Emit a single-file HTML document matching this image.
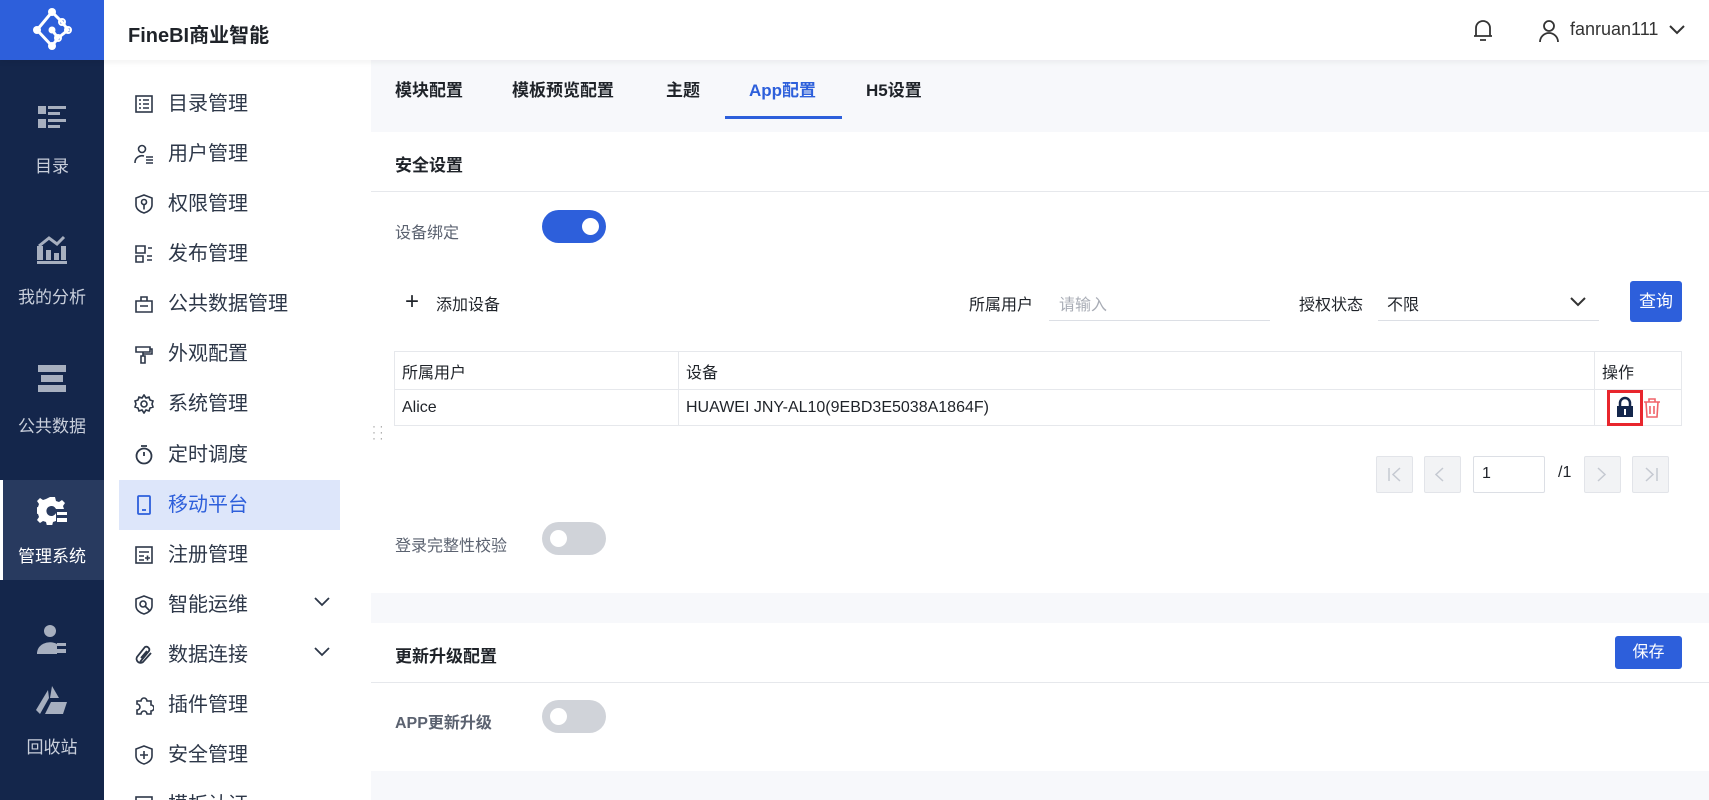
<!DOCTYPE html>
<html style="width:1709px;height:800px;overflow:hidden"><head><meta charset="utf-8"><style>
*{box-sizing:border-box;margin:0;padding:0}
body{width:1709px;height:800px;overflow:hidden;font-family:"Liberation Sans","Noto Sans CJK SC",sans-serif;background:#f7f8fb;position:relative;color:#1f2329}
#wrap{position:absolute;left:0;top:0;width:1709px;height:800px;overflow:hidden}
.a{position:absolute}
.top{left:0;top:0;width:1709px;height:60px;background:#fff;box-shadow:0 2px 6px rgba(0,0,0,.06);z-index:2}
.logo{left:0;top:0;width:104px;height:60px;background:#2d5fdb}
.dark{left:0;top:60px;width:104px;height:740px;background:#14264b}
.dl{color:#c9cfdb;font-size:17px;width:104px;text-align:center}
.side{left:104px;top:60px;width:267px;height:740px;background:#fff}
.mi{left:119px;width:221px;height:50px;font-size:20px;color:#2d3748;line-height:50px;padding-left:49px}
.mi svg{position:absolute;left:15px;top:15px}
.tab{top:60px;height:60px;line-height:62px;font-size:17px;font-weight:bold;color:#1f2329}
.card{left:371px;width:1338px;background:#fff}
.lbl{font-size:16px;color:#5b6270}
.tg{width:64px;height:33px;border-radius:17px;background:#d0d3d9}
.tg i{position:absolute;left:8px;top:8px;width:17px;height:17px;border-radius:50%;background:#fff}
.btn{background:#2d5fdb;color:#fff;border-radius:3px;font-size:17px;text-align:center}
.pg{width:37px;height:37px;border:1px solid #e2e4e9;background:#f2f3f5;border-radius:2px}
td{border:1px solid #e6e8ec;font-size:16px;padding-left:7px;color:#1f2329}
</style></head><body><div id="wrap">
<div class="a top"></div>
<div class="a logo" style="z-index:3"><svg width="104" height="60" viewBox="0 0 104 60"><g stroke="#fff" stroke-width="3" fill="none"><path d="M52 12 L37 30 L52 46 M52 12 L62 22 L68 30 L58 38 M52 30 L58 38 L52 46"/></g><g fill="#fff"><circle cx="52" cy="12" r="4"/><circle cx="37" cy="30" r="4"/><circle cx="52" cy="46" r="4"/><circle cx="52" cy="30" r="3.5"/><circle cx="62" cy="22" r="3" fill="none" stroke="#fff" stroke-width="2"/><circle cx="68" cy="30" r="3" fill="none" stroke="#fff" stroke-width="2"/><circle cx="58" cy="38" r="3" fill="none" stroke="#fff" stroke-width="2"/></g></svg></div>
<div class="a" style="left:128px;top:19px;font-size:20px;font-weight:bold;z-index:3">FineBI商业智能</div>
<svg class="a" style="left:1472px;top:18px;z-index:3" width="22" height="24" viewBox="0 0 22 24" fill="none" stroke="#333" stroke-width="1.8"><path d="M4 18 V10 a7 7 0 0 1 14 0 V18 Z M2 18 H20 M8 22 H14"/></svg>
<svg class="a" style="left:1538px;top:19px;z-index:3" width="22" height="24" viewBox="0 0 22 24" fill="none" stroke="#333" stroke-width="1.8"><circle cx="11" cy="7" r="5"/><path d="M2 23 a9 9 0 0 1 18 0"/></svg>
<div class="a" style="left:1570px;top:19px;font-size:18px;color:#333;z-index:3">fanruan111</div>
<svg class="a" style="left:1668px;top:24px;z-index:3" width="18" height="12" viewBox="0 0 18 12" fill="none" stroke="#333" stroke-width="2"><path d="M2 2 L9 9 L16 2"/></svg>

<div class="a dark"></div>
<svg class="a" style="left:38px;top:106px" width="28" height="26"><g fill="#a7afbf"><rect x="0" y="0" width="8" height="8"/><rect x="0" y="13" width="8" height="9"/><rect x="10" y="0" width="18" height="3"/><rect x="10" y="6" width="12" height="3"/><rect x="10" y="13" width="18" height="3"/><rect x="10" y="19" width="12" height="3"/></g></svg>
<div class="a dl" style="top:152px">目录</div>
<svg class="a" style="left:37px;top:234px" width="30" height="30"><g fill="#a7afbf"><rect x="0" y="12" width="6" height="14"/><rect x="9" y="16" width="5" height="10"/><rect x="17" y="19" width="5" height="7"/><rect x="24" y="12" width="5" height="14"/><rect x="0" y="27" width="30" height="3"/><path d="M2 12 L12 4 L20 10 L27 3" stroke="#a7afbf" stroke-width="3" fill="none"/></g></svg>
<div class="a dl" style="top:283px">我的分析</div>
<svg class="a" style="left:38px;top:365px" width="28" height="28"><g fill="#a7afbf"><rect x="0" y="0" width="28" height="7"/><rect x="3" y="10" width="22" height="7"/><rect x="0" y="20" width="28" height="7"/></g></svg>
<div class="a dl" style="top:412px">公共数据</div>
<div class="a" style="left:0;top:480px;width:104px;height:100px;background:#283a5f;border-left:3px solid #fff"></div>
<svg class="a" style="left:37px;top:495px" width="30" height="30"><path fill="#fff" d="M13 2 h5 l1 4 3 1 3-2 3 3-2 3 1 3 h-8 a5 5 0 1 0 0 4 v8 l-3 1-1 4h-5l-1-4-3-1-3 2-3-3 2-3-1-3-4-1v-5l4-1 1-3-2-3 3-3 3 2 3-1z"/><rect x="20" y="17" width="10" height="3" fill="#fff"/><rect x="20" y="23" width="10" height="4" fill="#fff"/></svg>
<div class="a dl" style="top:542px;color:#fff">管理系统</div>
<svg class="a" style="left:37px;top:624px" width="30" height="30"><g fill="#a7afbf"><circle cx="13" cy="7" r="6"/><path d="M0 30 a13 11 0 0 1 20-10 v10z"/><rect x="20" y="19" width="9" height="3"/><rect x="20" y="25" width="9" height="4"/></g></svg>
<svg class="a" style="left:36px;top:686px" width="32" height="28"><g fill="#a7afbf"><path d="M16 0 l7 12 h-9 z M12 4 l-12 20 l4 4 l9-16z M15 16 h16 l-4 12 h-18z"/></g></svg>
<div class="a dl" style="top:733px">回收站</div>

<div class="a side"></div>
<div class="a" style="left:119px;top:480px;width:221px;height:50px;background:#dde6fa"></div>
<div class="a mi" style="top:79px"><svg width="20" height="20" fill="none" stroke="#2d3748" stroke-width="1.6"><rect x="2" y="2" width="16" height="16"/><path d="M5 6h2M9 6h6M5 10h2M9 10h6M5 14h2M9 14h6"/></svg>目录管理</div>
<div class="a mi" style="top:129px"><svg width="20" height="20" fill="none" stroke="#2d3748" stroke-width="1.6"><circle cx="8" cy="5" r="3.5"/><path d="M1 19a7 7 0 0 1 9-7M12 13h7M12 16h7M12 19h7"/></svg>用户管理</div>
<div class="a mi" style="top:179px"><svg width="20" height="20" fill="none" stroke="#2d3748" stroke-width="1.6"><path d="M10 1l8 3v7c0 4-4 7-8 8-4-1-8-4-8-8V4z"/><circle cx="10" cy="8" r="2.5"/><path d="M10 10.5v5"/></svg>权限管理</div>
<div class="a mi" style="top:229px"><svg width="20" height="20" fill="none" stroke="#2d3748" stroke-width="1.6"><path d="M2 2h9v7H2zM2 12h7v6H2zM13 12h5M13 16h5M14 4h4"/></svg>发布管理</div>
<div class="a mi" style="top:279px"><svg width="20" height="20" fill="none" stroke="#2d3748" stroke-width="1.6"><path d="M2 7h16v11H2zM7 7V3h6v4M6 12h8"/></svg>公共数据管理</div>
<div class="a mi" style="top:329px"><svg width="20" height="20" fill="none" stroke="#2d3748" stroke-width="1.6"><path d="M2 3h14v5H2zM9 8v4M7 12h4v7H7zM16 5h2v5h-9"/></svg>外观配置</div>
<div class="a mi" style="top:379px"><svg width="20" height="20" fill="none" stroke="#2d3748" stroke-width="1.6"><circle cx="10" cy="10" r="3"/><path d="M10 1l2 3 3-1 1 3 3 1-1 3 1 3-3 1-1 3-3-1-2 3-2-3-3 1-1-3-3-1 1-3-1-3 3-1 1-3 3 1z"/></svg>系统管理</div>
<div class="a mi" style="top:430px"><svg width="20" height="20" fill="none" stroke="#2d3748" stroke-width="1.8"><circle cx="10" cy="11" r="7.5"/><path d="M7 1h6M10 11V7"/></svg>定时调度</div>
<div class="a mi" style="top:480px;color:#2d5fdb"><svg width="20" height="20" fill="none" stroke="#2d5fdb" stroke-width="1.8"><rect x="4" y="1" width="12" height="18" rx="1"/><path d="M8 15h4"/></svg>移动平台</div>
<div class="a mi" style="top:530px"><svg width="20" height="20" fill="none" stroke="#2d3748" stroke-width="1.6"><rect x="2" y="2" width="16" height="16"/><path d="M5 7h10M5 11h5M5 15h5M11 13h5M13.5 10.5v5"/></svg>注册管理</div>
<div class="a mi" style="top:580px"><svg width="20" height="20" fill="none" stroke="#2d3748" stroke-width="1.6"><path d="M10 1l8 3v7c0 4-4 7-8 8-4-1-8-4-8-8V4z"/><circle cx="9" cy="9" r="3"/><path d="M11 11l5 5"/></svg>智能运维<svg style="left:195px;top:17px" width="16" height="10" fill="none" stroke="#2d3748" stroke-width="1.8"><path d="M1 1l7 7 7-7"/></svg></div>
<div class="a mi" style="top:630px"><svg width="20" height="20" fill="none" stroke="#2d3748" stroke-width="1.8"><path d="M6 17L15 6a3 3 0 0 0-4-4L3 12a4 4 0 0 0 6 5l8-9M7 13l6-7"/></svg>数据连接<svg style="left:195px;top:17px" width="16" height="10" fill="none" stroke="#2d3748" stroke-width="1.8"><path d="M1 1l7 7 7-7"/></svg></div>
<div class="a mi" style="top:680px"><svg width="20" height="20" fill="none" stroke="#2d3748" stroke-width="1.6"><path d="M3 6h4a3 3 0 0 1 6 0h4v4a3 3 0 0 1 0 6v3H13a3 3 0 0 0-6 0H3v-4a3 3 0 0 0 0-6z"/></svg>插件管理</div>
<div class="a mi" style="top:730px"><svg width="20" height="20" fill="none" stroke="#2d3748" stroke-width="1.6"><path d="M10 1l8 3v7c0 4-4 7-8 8-4-1-8-4-8-8V4z"/><path d="M6 10h8M10 6v8"/></svg>安全管理</div>
<div class="a mi" style="top:780px;height:20px;overflow:hidden"><svg width="20" height="20" fill="none" stroke="#2d3748" stroke-width="1.6"><rect x="2" y="2" width="16" height="16"/></svg>模板认证</div>

<div class="a tab" style="left:395px">模块配置</div>
<div class="a tab" style="left:512px">模板预览配置</div>
<div class="a tab" style="left:666px">主题</div>
<div class="a tab" style="left:749px;color:#2d5fdb">App配置</div>
<div class="a" style="left:725px;top:116px;width:117px;height:3px;background:#2d5fdb"></div>
<div class="a tab" style="left:866px">H5设置</div>

<div class="a card" style="top:132px;height:461px"></div>
<div class="a" style="left:395px;top:151px;font-size:17px;font-weight:bold">安全设置</div>
<div class="a" style="left:371px;top:191px;width:1338px;height:1px;background:#e6e8ec"></div>
<div class="a lbl" style="left:395px;top:219px">设备绑定</div>
<div class="a tg" style="left:542px;top:210px;background:#2d5fdb"><i style="left:40px"></i></div>
<div class="a" style="left:405px;top:289px;font-size:24px;color:#1f2329;line-height:26px">+</div>
<div class="a" style="left:436px;top:291px;font-size:16px">添加设备</div>
<div class="a" style="left:969px;top:291px;font-size:16px">所属用户</div>
<div class="a" style="left:1049px;top:291px;font-size:16px;color:#a9adb6;padding-left:10px;width:221px;height:30px;border-bottom:1px solid #dcdfe5">请输入</div>
<div class="a" style="left:1299px;top:291px;font-size:16px">授权状态</div>
<div class="a" style="left:1378px;top:291px;font-size:16px;padding-left:9px;width:221px;height:30px;border-bottom:1px solid #dcdfe5">不限</div>
<svg class="a" style="left:1569px;top:296px" width="18" height="12" fill="none" stroke="#333" stroke-width="2"><path d="M2 2l7 7 7-7"/></svg>
<div class="a btn" style="left:1630px;top:281px;width:52px;height:41px;line-height:41px">查询</div>
<table class="a" style="left:394px;top:351px;width:1288px;border-collapse:collapse">
<tr style="height:38px"><td style="width:284px">所属用户</td><td style="width:916px">设备</td><td>操作</td></tr>
<tr style="height:36px"><td>Alice</td><td>HUAWEI JNY-AL10(9EBD3E5038A1864F)</td><td></td></tr></table>
<div class="a" style="left:1607px;top:390px;width:36px;height:36px;border:3px solid #e8262d"></div>
<svg class="a" style="left:1616px;top:396px" width="18" height="22"><path d="M4 10V7a5 5 0 0 1 10 0v3" fill="none" stroke="#14264b" stroke-width="2.5"/><rect x="1" y="10" width="16" height="11" fill="#14264b"/><rect x="8" y="13" width="2" height="6" fill="#fff"/></svg>
<svg class="a" style="left:1643px;top:398px" width="18" height="20" fill="none" stroke="#f0646a" stroke-width="1.6"><path d="M1 4h16M6 4V1h6v3M3 4l1 15h10l1-15M7 8v8M11 8v8"/></svg>
<div class="a" style="left:372px;top:423px;color:#999;font-size:12px;line-height:6px">·&nbsp;·<br>·&nbsp;·<br>·&nbsp;·</div>
<div class="a pg" style="left:1376px;top:456px"></div>
<div class="a pg" style="left:1424px;top:456px"></div>
<div class="a" style="left:1473px;top:456px;width:72px;height:37px;border:1px solid #dcdfe5;border-radius:2px;font-size:16px;padding:8px 8px">1</div>
<div class="a" style="left:1558px;top:464px;font-size:16px">/1</div>
<div class="a pg" style="left:1584px;top:456px"></div>
<div class="a pg" style="left:1632px;top:456px"></div>
<svg class="a" style="left:1376px;top:456px" width="300" height="37" fill="none" stroke="#c5c9d1" stroke-width="1.5"><path d="M13 12v13M24 12l-7 6.5 7 6.5M67 12l-7 6.5 7 6.5M222 12l7 6.5-7 6.5M270 12l7 6.5-7 6.5M281 12v13"/></svg>
<div class="a lbl" style="left:395px;top:532px">登录完整性校验</div>
<div class="a tg" style="left:542px;top:522px"><i></i></div>

<div class="a card" style="top:623px;height:148px"></div>
<div class="a" style="left:395px;top:642px;font-size:17px;font-weight:bold">更新升级配置</div>
<div class="a btn" style="left:1615px;top:636px;width:67px;height:33px;line-height:33px;font-size:16px">保存</div>
<div class="a" style="left:371px;top:682px;width:1338px;height:1px;background:#e6e8ec"></div>
<div class="a lbl" style="left:395px;top:709px;font-weight:bold">APP更新升级</div>
<div class="a tg" style="left:542px;top:700px"><i></i></div>
</div></body></html>
